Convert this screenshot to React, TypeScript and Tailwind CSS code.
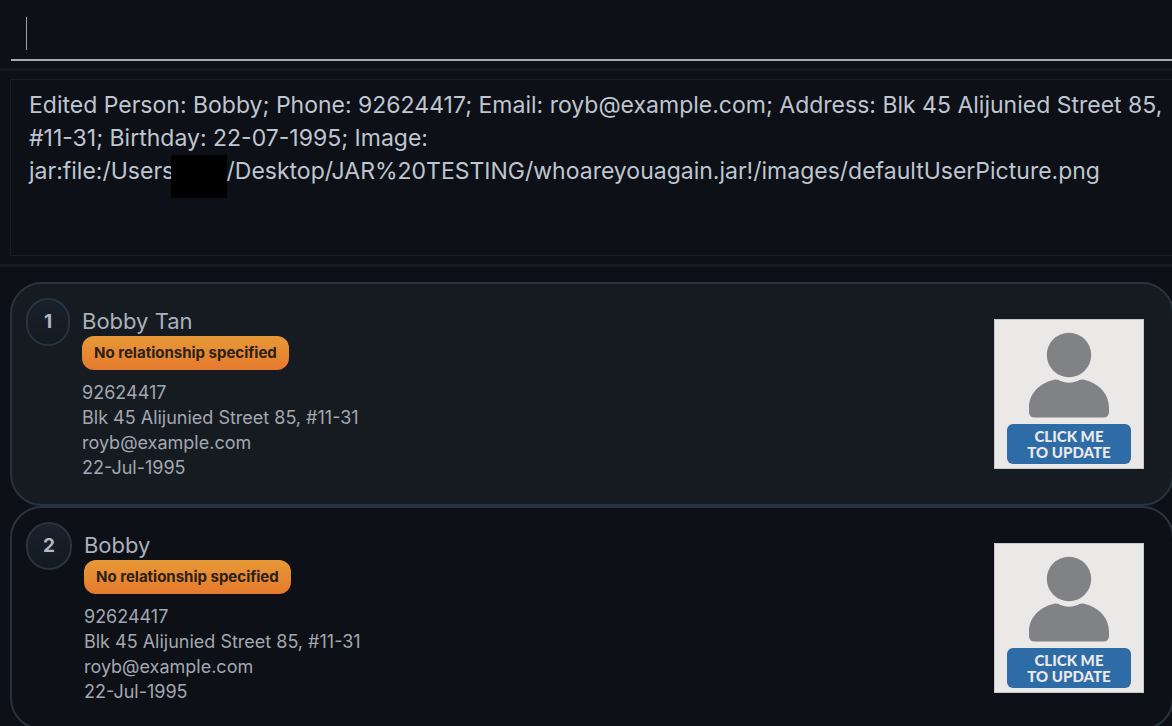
import React from "react";

type Person = {
  index: number;
  name: string;
  relationship: string;
  phone: string;
  address: string;
  email: string;
  birthday: string;
};

const people: Person[] = [
  {
    index: 1,
    name: "Bobby Tan",
    relationship: "No relationship specified",
    phone: "92624417",
    address: "Blk 45 Alijunied Street 85, #11-31",
    email: "royb@example.com",
    birthday: "22-Jul-1995",
  },
  {
    index: 2,
    name: "Bobby",
    relationship: "No relationship specified",
    phone: "92624417",
    address: "Blk 45 Alijunied Street 85, #11-31",
    email: "royb@example.com",
    birthday: "22-Jul-1995",
  },
];

function PictureButton() {
  return (
    <button
      type="button"
      className="flex size-[150px] shrink-0 flex-col items-center border border-[#c9c9c9] bg-[#ebe9e7] pt-3"
    >
      <svg viewBox="0 0 82 86" className="h-[86px] w-[82px]" fill="#808285" aria-hidden="true">
        <circle cx="41" cy="23" r="22.2" />
        <path d="M27 47.6Q30 47.6 32.5 49Q41 52.5 49.5 49Q52 47.6 55 47.6C70 51 81 61 81 76V80Q81 85.6 75 85.6H7Q1 85.6 1 80V76C1 61 12 51 27 47.6Z" />
      </svg>
      <span className="mt-[6px] flex h-10 w-[124px] items-center justify-center rounded-md bg-[#2d6ca6] pb-px text-center font-['Lato'] text-[15px] leading-4 font-black text-[#ebe9e7]">
        CLICK ME
        <br />
        TO UPDATE
      </span>
    </button>
  );
}

function PersonCard({ person, selected }: { person: Person; selected: boolean }) {
  return (
    <li
      className={`flex items-center rounded-[32px] border-2 border-[#28333f] px-[14px] pt-[14px] pb-6 ${
        selected ? "bg-[#161b22]" : "bg-[#0d1017]"
      }`}
    >
      <div className="flex h-12 min-w-11 shrink-0 items-center justify-center self-start rounded-full border-2 border-[#273442] bg-linear-to-b from-[#1b212d] to-[#131920] px-[15px] text-[19px] font-bold text-[#b3b9c3]">
        {person.index}
      </div>
      <div className="ml-3 min-w-0 flex-1 pt-2">
        <h2 className="text-[22px] leading-[30px] text-[#abb1bb]">{person.name}</h2>
        <span className="flex h-[34px] w-fit items-center rounded-xl bg-linear-to-b from-[#e69936] to-[#e6792e] px-3 text-[15px] font-bold text-[#2a2118]">
          {person.relationship}
        </span>
        <div className="mt-[10px] text-lg leading-[25px] text-[#a2a8b1]">
          <p>{person.phone}</p>
          <p>{person.address}</p>
          <p>{person.email}</p>
          <p>{person.birthday}</p>
        </div>
      </div>
      <div className="mr-[14px] pt-[10px]">
        <PictureButton />
      </div>
    </li>
  );
}

export default function App() {
  return (
    <main className="flex h-screen flex-col overflow-hidden bg-[#0d1017] font-['Inter',sans-serif]">
      <section className="border-b-[3px] border-[#161a22] pb-[7px] pl-[11px]">
        <div className="flex h-[61px] items-center border-b-2 border-[#a5abb5] pt-2 pl-[15px]">
          <span className="h-[33px] w-px bg-[#9ba1ab]" />
          <input
            type="text"
            aria-label="Command"
            className="h-[33px] min-w-0 flex-1 bg-transparent text-[23px] text-[#bfc6cf] outline-none"
          />
        </div>
      </section>

      <section className="border-b-[3px] border-[#161a22] py-2 pl-[10px]">
        <div className="min-h-[177px] border border-r-0 border-[#181c24] pt-[9px] pl-[18px]">
          <p className="text-[23px] leading-[33px] text-[#bfc6cf]">
            Edited Person: Bobby; Phone: 92624417; Email: royb@example.com; Address: Blk 45 Alijunied Street 85,
            #11-31; Birthday: 22-07-1995; Image:{" "}
            <span className="whitespace-nowrap">
              jar:file:/Users/
              <span className="relative inline-block h-5 w-11">
                <span className="absolute -top-1 right-0 -left-3 h-[43px] bg-black" />
              </span>
              /Desktop/JAR%20TESTING/whoareyouagain.jar!/images/defaultUserPicture.png
            </span>
          </p>
        </div>
      </section>

      <ul className="-mr-0.5 min-h-0 flex-1 overflow-hidden pt-[15px] pl-[10px]">
        {people.map((person) => (
          <PersonCard key={person.index} person={person} selected={person.index === 1} />
        ))}
      </ul>
    </main>
  );
}
